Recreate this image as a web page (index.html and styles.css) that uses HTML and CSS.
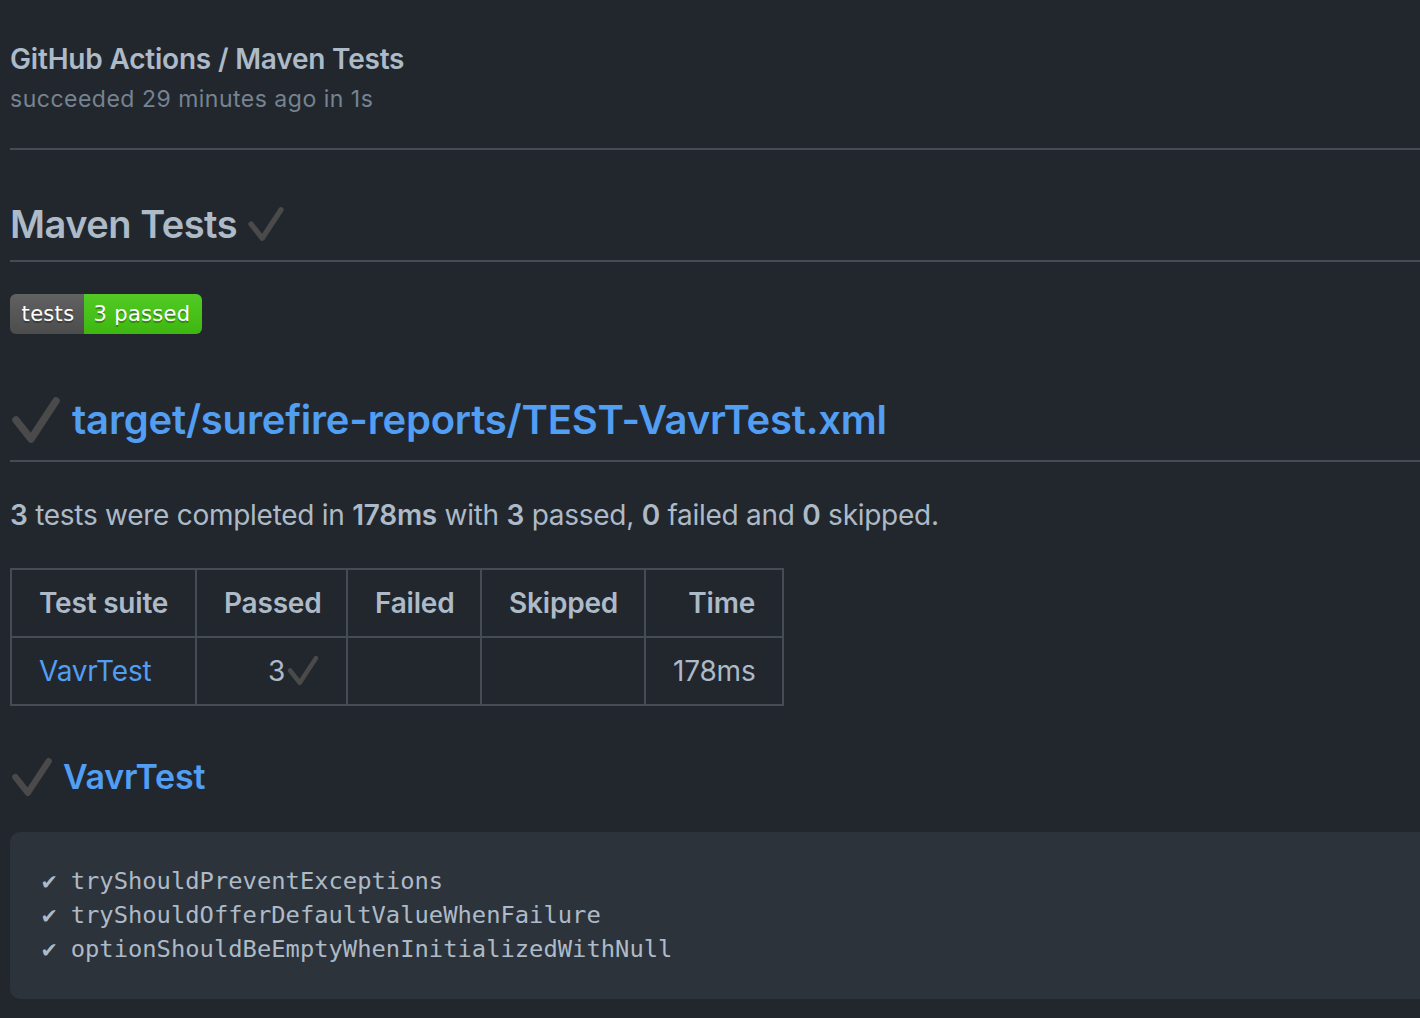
FILE: index.html
```html
<!DOCTYPE html>
<html lang="en">
<head>
<meta charset="utf-8">
<title>Maven Tests</title>
<link rel="stylesheet" href="styles.css">
</head>
<body>
<div class="page">
  <header class="run-head">
    <div class="run-title">GitHub Actions / Maven Tests</div>
    <div class="run-meta">succeeded 29 minutes ago in 1s</div>
  </header>
  <main class="md">
    <h2 class="h-title">Maven Tests <svg class="chk chk-title" viewBox="0 0 48 48" aria-hidden="true"><polyline points="4,24 19,43 44,5"/></svg></h2>
    <div class="badge"><span class="badge-l">tests</span><span class="badge-r">3 passed</span></div>
    <h2 class="h-file"><svg class="chk chk-file" viewBox="0 0 48 48" aria-hidden="true"><polyline points="4,24 19,43 44,5"/></svg><a class="lnk" href="#">target/surefire-reports/TEST-VavrTest.xml</a></h2>
    <p class="summary"><b>3</b> tests were completed in <b>178ms</b> with <b>3</b> passed, <b>0</b> failed and <b>0</b> skipped.</p>
    <table class="tbl">
      <colgroup>
        <col class="c1"><col class="c2"><col class="c3"><col class="c4"><col class="c5">
      </colgroup>
      <thead>
        <tr><th>Test suite</th><th class="r">Passed</th><th>Failed</th><th>Skipped</th><th class="r">Time</th></tr>
      </thead>
      <tbody>
        <tr><td><a class="lnk" href="#">VavrTest</a></td><td class="r">3<svg class="chk chk-cell" viewBox="0 0 48 48" aria-hidden="true"><polyline points="4,24 19,43 44,5"/></svg></td><td></td><td></td><td class="r">178ms</td></tr>
      </tbody>
    </table>
    <h3 class="h-suite"><svg class="chk chk-suite" viewBox="0 0 48 48" aria-hidden="true"><polyline points="4,24 19,43 44,5"/></svg><a class="lnk" href="#">VavrTest</a></h3>
    <pre class="code"><code>✔ tryShouldPreventExceptions
✔ tryShouldOfferDefaultValueWhenFailure
✔ optionShouldBeEmptyWhenInitializedWithNull</code></pre>
  </main>
</div>
</body>
</html>
```
FILE: styles.css
```css
html, body {
  margin: 0;
  padding: 0;
  background: #22272e;
  overflow: hidden;
}
body {
  font-family: Inter, "Liberation Sans", sans-serif;
  color: #adbac7;
}
.page {
  width: 1480px;
  padding: 39px 0 0 10px;
}
.run-head {
  padding-bottom: 34px;
  border-bottom: 2px solid #444c56;
}
.run-title {
  font-size: 28px;
  font-weight: 600;
  line-height: 40px;
  letter-spacing: -0.2px;
  color: #adbac7;
}
.run-meta {
  margin-top: 5px;
  font-size: 23px;
  line-height: 30px;
  letter-spacing: 0.5px;
  color: #768390;
}
.md h2, .md h3 {
  margin: 0;
  font-weight: 600;
}
.h-title {
  margin-top: 49px !important;
  font-size: 38px;
  line-height: 50px;
  letter-spacing: -0.5px;
  padding-bottom: 11px;
  border-bottom: 2px solid #444c56;
  display: flex;
  align-items: center;
}
.chk {
  fill: none;
  stroke: #4a4a4a;
  stroke-width: 7;
  stroke-linecap: round;
  stroke-linejoin: round;
  flex: none;
}
.chk-title {
  width: 36px;
  height: 36px;
  margin-left: 11px;
}
.badge {
  display: inline-flex;
  margin-top: 32px;
  height: 40px;
  border-radius: 6px;
  overflow: hidden;
  font-family: "DejaVu Sans", Verdana, sans-serif;
  font-size: 21px;
  line-height: 40px;
  letter-spacing: 0.3px;
  color: #fff;
  text-shadow: 0 2px 0 rgba(1, 1, 1, 0.3);
  vertical-align: top;
}
.badge-l, .badge-r {
  display: block;
  text-align: center;
  background-image: linear-gradient(to bottom, rgba(187, 187, 187, 0.12), rgba(0, 0, 0, 0.1));
}
.badge-l {
  width: 74px;
  padding-left: 2px;
  box-sizing: border-box;
  background-color: #555;
}
.badge-r {
  width: 118px;
  padding-right: 2px;
  box-sizing: border-box;
  background-color: #4c1;
}
.h-file {
  margin-top: 61px !important;
  font-size: 40px;
  line-height: 50px;
  letter-spacing: -0.2px;
  padding-bottom: 15px;
  border-bottom: 2px solid #444c56;
  display: flex;
  align-items: center;
}
.chk-file {
  width: 48px;
  height: 48px;
  margin: 0 12px 0 2px;
  stroke-width: 7.5;
}
.lnk {
  color: #519ef3;
  text-decoration: none;
}
.summary {
  margin: 32px 0 0;
  font-size: 28px;
  line-height: 42px;
  letter-spacing: -0.27px;
}
.summary b {
  font-weight: 600;
}
.tbl {
  margin-top: 32px;
  border-collapse: collapse;
  table-layout: fixed;
  width: 774px;
  font-size: 28px;
  line-height: 42px;
  letter-spacing: -0.2px;
}
.c1 { width: 185px; }
.c2 { width: 151px; }
.c3 { width: 134px; }
.c4 { width: 164px; }
.c5 { width: 138px; }
.tbl th, .tbl td {
  border: 2px solid #444c56;
  padding: 12px 27px;
  white-space: nowrap;
}
.tbl th {
  font-weight: 600;
  text-align: center;
}
.tbl td {
  text-align: left;
}
.tbl .r {
  text-align: right;
}
.chk-cell {
  width: 32px;
  height: 31px;
  vertical-align: -5px;
  margin-left: 2px;
  stroke-width: 7;
}
.h-suite {
  margin-top: 49px !important;
  font-size: 34px;
  line-height: 43px;
  letter-spacing: -0.2px;
  display: flex;
  align-items: center;
}
.chk-suite {
  width: 40px;
  height: 40px;
  margin: 0 11px 0 2px;
  stroke-width: 7.5;
}
.code {
  margin: 34px 0 0;
  padding: 32px 32px;
  background: #2d333b;
  border-radius: 10px;
  font-family: "DejaVu Sans Mono", "Liberation Mono", monospace;
  font-size: 23.8px;
  line-height: 34.2px;
  color: #adbac7;
}
```
